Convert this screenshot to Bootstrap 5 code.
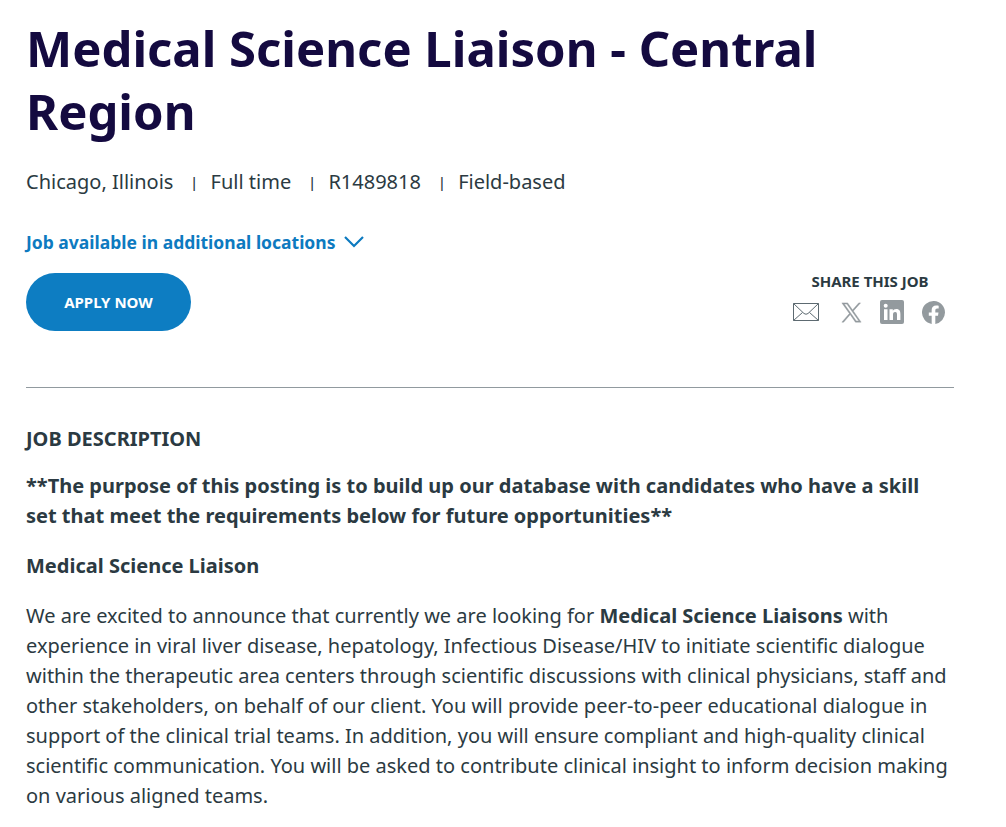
<!DOCTYPE html>
<html lang="en">

<head>
    <meta charset="UTF-8" />
    <meta name="viewport" content="width=device-width, initial-scale=1">
    <title>Medical Science Liaison - Central Region</title>
    <link rel="stylesheet" href="https://cdn.jsdelivr.net/npm/bootstrap@5.3.0/dist/css/bootstrap.min.css">
    <style>
        body {
            font-family: "Noto Sans", sans-serif;
            font-size: 20px;
            line-height: 30px;
            color: #2b3a42;
            overflow: hidden;
        }

        .job-page {
            padding: 17px 52px 0 26px;
        }

        .job-title {
            font-size: 49px;
            line-height: 63px;
            color: #140a40;
            margin-bottom: 24px;
        }

        .job-meta {
            margin-bottom: 30px;
        }

        .job-meta li + li::before {
            content: "|";
            display: inline-block;
            width: 8px;
            font-size: 15px;
            font-weight: 500;
            line-height: 1;
            vertical-align: 1px;
            text-align: center;
            margin: 0 12.5px 0 16.7px;
        }

        .more-locations {
            font-size: 17.5px;
            color: #0d7ac0;
        }

        .more-locations svg {
            margin-left: 9px;
        }

        .btn-apply {
            width: 165px;
            height: 58px;
            font-size: 15px;
            --bs-btn-color: #fff;
            --bs-btn-bg: #0d7dc2;
            --bs-btn-hover-color: #fff;
            --bs-btn-hover-bg: #0a679f;
        }

        .job-actions {
            margin-top: 16px;
        }

        .share-job {
            width: 168px;
        }

        .share-label {
            font-size: 15px;
            line-height: 16px;
            margin-bottom: 11px;
        }

        .share-links {
            padding: 0 9px 0 7px;
        }

        .share-links a {
            color: #939a9e;
        }

        .divider {
            margin: 56px 0 0;
            border-top: 1px solid #919a9f;
            opacity: 1;
        }

        .job-body {
            padding-top: 36px;
        }

        .job-heading {
            font-size: 20px;
            line-height: 30px;
            margin-bottom: 17px;
        }

        .job-body p {
            margin-bottom: 20px;
        }
    </style>
</head>

<body>
    <main class="job-page">
        <h1 class="job-title fw-bold">Medical Science Liaison - Central Region</h1>
        <ul class="job-meta list-unstyled d-flex">
            <li>Chicago, Illinois</li>
            <li>Full time</li>
            <li>R1489818</li>
            <li>Field-based</li>
        </ul>
        <a href="#" class="more-locations d-flex align-items-center fw-bold text-decoration-none">
            Job available in additional locations
            <svg width="20" height="12" viewBox="0 0 20 12" fill="none" stroke="currentColor" stroke-width="2.2"><path d="M1 1l9 9 9-9" /></svg>
        </a>
        <div class="job-actions d-flex justify-content-between align-items-start">
            <button type="button" class="btn btn-apply rounded-pill border-0 fw-bold">APPLY NOW</button>
            <div class="share-job">
                <div class="share-label fw-bold text-center">SHARE THIS JOB</div>
                <div class="share-links d-flex justify-content-between align-items-center">
                    <a href="#" class="d-flex" aria-label="Email">
                        <svg width="26" height="18" viewBox="0 0 26 18" fill="none" stroke="#5d6a71"><path d="M.5.5h25v17H.5zM.5.5L11 10.5q2 1.500 4 0L25.500.5M.5 17.500l9-8M25.500 17.500l-9-8" /></svg>
                    </a>
                    <a href="#" class="d-flex ms-1" aria-label="X">
                        <svg width="21" height="21" viewBox="0 0 24 24" fill="currentColor" stroke="currentColor" stroke-width=".5"><path fill-rule="evenodd" d="M14.1 10.3L22.3 1h-2l-7.1 8.1L7.6 1H1l8.6 12.2L1 23h2l7.5-8.6 6 8.6H23zM3.7 2.4h3l13.7 19.2h-3z" /></svg>
                    </a>
                    <a href="#" class="d-flex" aria-label="LinkedIn">
                        <svg width="24" height="24" viewBox="0 0 24 24"><rect width="24" height="24" rx="2" fill="currentColor" /><g fill="#fff"><circle cx="5.7" cy="5.8" r="2" /><path d="M4 9.2h3.5V20H4zM9.5 9.2h3.3v1.5c.5-.9 1.7-1.8 3.4-1.8 3.6 0 4.2 2.3 4.2 5.3V20H17v-5.2c0-1.3 0-2.9-1.8-2.9S13 13.3 13 14.7V20H9.5z" /></g></svg>
                    </a>
                    <a href="#" class="d-flex" aria-label="Facebook">
                        <svg width="23" height="23" viewBox="0 0 24 24" fill="currentColor"><path d="M24 12a12 12 0 1 0-13.9 11.9v-8.4H7.1V12h3V9.4c0-3 1.8-4.7 4.6-4.7 1.3 0 2.7.2 2.7.2v3h-1.5c-1.5 0-2 .9-2 1.9V12h3.3l-.5 3.5h-2.8v8.4A12 12 0 0 0 24 12z" /></svg>
                    </a>
                </div>
            </div>
        </div>
        <hr class="divider">
        <section class="job-body">
            <h2 class="job-heading fw-bold">JOB DESCRIPTION</h2>
            <p class="fw-bold">**The purpose of this posting is to build up our database with candidates who have a skill set that meet the requirements below for future opportunities**</p>
            <p class="fw-bold">Medical Science Liaison</p>
            <p>We are excited to announce that currently we are looking for <b>Medical Science Liaisons</b> with experience in viral liver disease, hepatology, Infectious Disease/HIV to initiate scientific dialogue within the therapeutic area centers through scientific discussions with clinical physicians, staff and other stakeholders, on behalf of our client. You will provide peer-to-peer educational dialogue in support of the clinical trial teams. In addition, you will ensure compliant and high-quality clinical scientific communication. You will be asked to contribute clinical insight to inform decision making on various aligned teams.</p>
        </section>
    </main>
    <script src="https://cdn.jsdelivr.net/npm/bootstrap@5.3.0/dist/js/bootstrap.bundle.min.js"></script>
</body>

</html>
